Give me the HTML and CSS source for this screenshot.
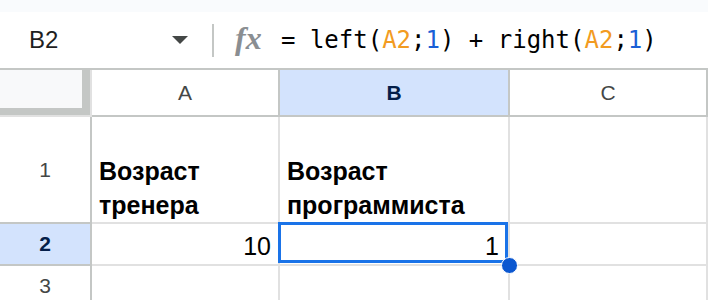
FILE: index.html
```html
<!DOCTYPE html>
<html lang="ru">
<head>
  <meta charset="UTF-8">
  <meta name="viewport" content="width=device-width, initial-scale=1.0">
  <title>Таблица</title>
  <link rel="stylesheet" href="styles.css">
</head>
<body>
  <div class="top-strip"></div>

  <!-- строка формул -->
  <div class="formula-bar">
    <div class="name-box">
      <span class="cell-ref">B2</span>
      <svg class="caret" width="16" height="8" viewBox="0 0 16 8"><path d="M0 0h16L8 8z" fill="#444746"/></svg>
    </div>
    <div class="divider"></div>
    <span class="fx">fx</span>
    <div class="formula">= left(<span class="ref">A2</span>;<span class="num">1</span>) + right(<span class="ref">A2</span>;<span class="num">1</span>)</div>
  </div>

  <!-- сетка листа -->
  <div class="sheet">
    <div class="corner"><div class="corner-inner"></div></div>
    <div class="col-head">A</div>
    <div class="col-head active">B</div>
    <div class="col-head">C</div>

    <div class="row-head">1</div>
    <div class="cell text">Возраст тренера</div>
    <div class="cell text">Возраст программиста</div>
    <div class="cell"></div>

    <div class="row-head active">2</div>
    <div class="cell number">10</div>
    <div class="cell number selected">1<span class="handle"></span></div>
    <div class="cell"></div>

    <div class="row-head">3</div>
    <div class="cell"></div>
    <div class="cell"></div>
    <div class="cell"></div>
  </div>
</body>
</html>
```

FILE: styles.css
```css
body {
  margin: 0;
  font-family: "Liberation Sans", Arial, sans-serif;
  background: #fff;
  overflow: hidden;
}
.top-strip {
  height: 12px;
  background: #f9fbfd;
}
.formula-bar {
  display: flex;
  align-items: center;
  height: 56px;
  border-bottom: 2px solid #c4c7c5;
}
.name-box {
  display: flex;
  align-items: center;
  width: 212px;
  box-sizing: border-box;
  padding-left: 29px;
}
.cell-ref {
  font-size: 24px;
  color: #1f1f1f;
  width: 143px;
}
.caret {
  display: block;
}
.divider {
  width: 2px;
  height: 33px;
  background: #c4c7c5;
}
.fx {
  font-family: "Liberation Serif", serif;
  font-style: italic;
  font-weight: bold;
  font-size: 32px;
  color: #8a8e92;
  margin-left: 21px;
  width: 28px;
  margin-top: -4px;
}
.formula {
  font-family: "DejaVu Sans Mono", monospace;
  font-size: 24px;
  color: #000;
  margin-left: 18px;
  white-space: pre;
}
.ref {
  color: #f29b21;
}
.num {
  color: #1a5fd6;
}

.sheet {
  display: grid;
  grid-template-columns: 92px 188px 230px 1fr;
  grid-template-rows: 47px 107px 42px 42px;
}
.sheet > div {
  box-sizing: border-box;
  border-right: 2px solid #e1e1e1;
  border-bottom: 2px solid #e1e1e1;
}
.corner {
  background: #c4c7c5;
}
.corner-inner {
  width: 82px;
  height: 38px;
  background: #f8f9fa;
}
.col-head {
  display: flex;
  align-items: center;
  justify-content: center;
  font-size: 21px;
  color: #444746;
  border-color: #c4c7c5 !important;
}
.row-head {
  display: flex;
  align-items: center;
  justify-content: center;
  font-size: 21px;
  color: #444746;
  border-color: #c4c7c5 !important;
}
.active {
  background: #d3e3fd;
  color: #041e49;
  font-weight: bold;
}
.cell {
  display: flex;
  align-items: flex-end;
  padding: 0 7px 0 7px;
  font-size: 25px;
  line-height: 34px;
  color: #000;
}
.text {
  font-weight: bold;
}
.number {
  justify-content: flex-end;
  padding-bottom: 1px;
}
.selected {
  position: relative;
  padding-right: 9px;
}
.selected::after {
  content: "";
  position: absolute;
  left: -2px;
  top: -2px;
  right: 0;
  bottom: 1px;
  border: 3px solid #1a73e8;
  pointer-events: none;
}
.handle {
  position: absolute;
  right: -10px;
  bottom: -10px;
  width: 15px;
  height: 15px;
  border-radius: 50%;
  background: #0b57d0;
  border: 1px solid #fff;
  z-index: 2;
}
```
